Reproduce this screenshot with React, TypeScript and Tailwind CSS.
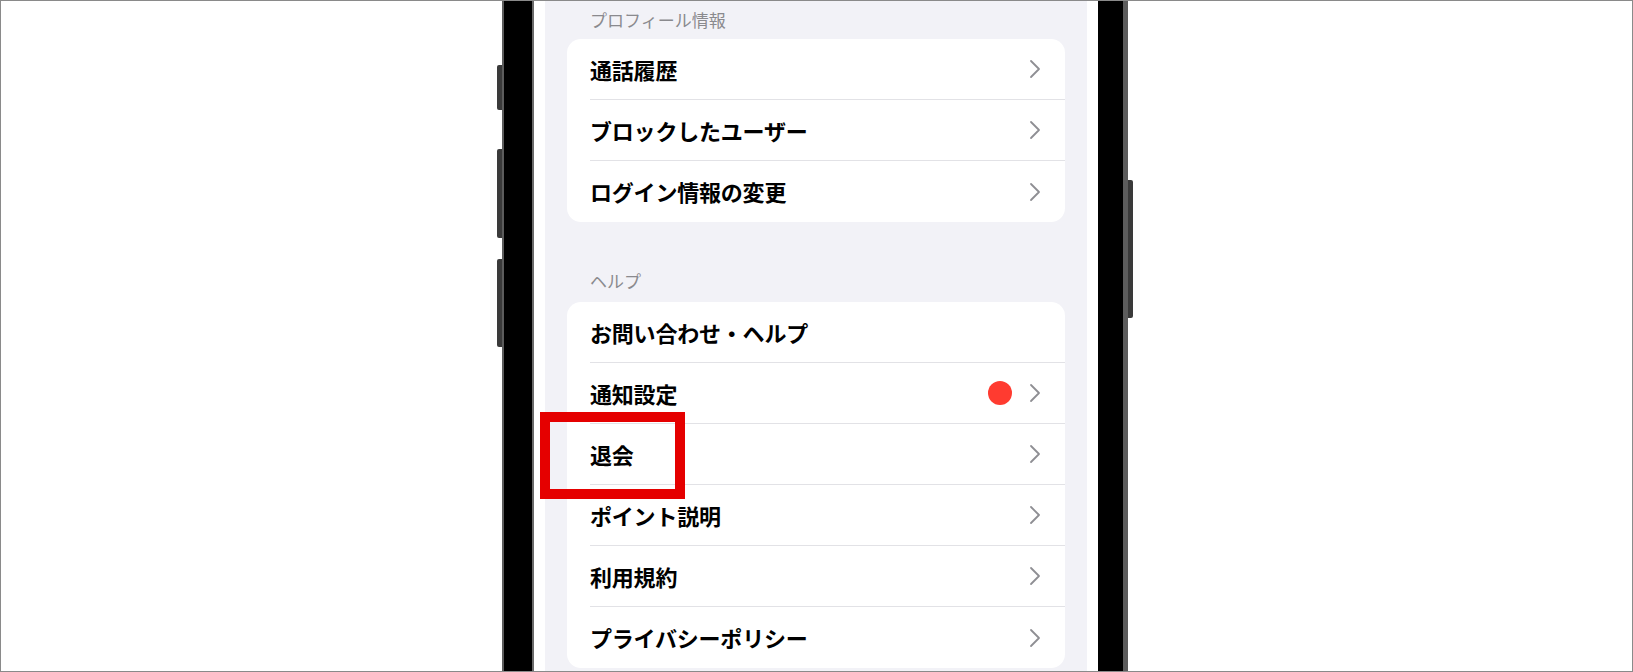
import React from 'react'

interface Row {
  label: string
  chevron?: boolean
  badge?: boolean
}

const profileRows: Row[] = [
  { label: '通話履歴', chevron: true },
  { label: 'ブロックしたユーザー', chevron: true },
  { label: 'ログイン情報の変更', chevron: true },
]

const helpRows: Row[] = [
  { label: 'お問い合わせ・ヘルプ' },
  { label: '通知設定', chevron: true, badge: true },
  { label: '退会', chevron: true },
  { label: 'ポイント説明', chevron: true },
  { label: '利用規約', chevron: true },
  { label: 'プライバシーポリシー', chevron: true },
]

function Chevron() {
  return (
    <svg width="12" height="20" viewBox="0 0 12 20" fill="none" className="shrink-0">
      <polyline points="2,2 10,10 2,18" stroke="#8e8e93" strokeWidth="1.8" strokeLinecap="round" strokeLinejoin="round" />
    </svg>
  )
}

function Card({ rows }: { rows: Row[] }) {
  return (
    <div className="bg-white rounded-[14px] overflow-hidden">
      {rows.map((row, i) => (
        <div key={row.label} className="h-[61px] pl-[23px]">
          <div
            className={`h-full flex items-center pr-[24px] ${i < rows.length - 1 ? 'border-b border-[#e2e2e6]' : ''}`}
          >
            <span className="flex-1 text-[22px] font-bold text-black tracking-[-0.2px]">{row.label}</span>
            {row.badge && <span className="w-[24px] h-[24px] rounded-full bg-[#ff3b30] mr-[17px]" />}
            {row.chevron && <Chevron />}
          </div>
        </div>
      ))}
    </div>
  )
}

function SectionHeader({ children }: { children: React.ReactNode }) {
  return <div className="h-[22px] leading-[22px] pl-[23px] text-[17px] text-[#8a8a8e]">{children}</div>
}

export default function App() {
  return (
    <div
      className="relative w-[1633px] h-[672px] border border-[#8a8a8a] bg-white flex overflow-hidden"
      style={{ fontFamily: '"Noto Sans CJK JP", "Noto Sans", sans-serif' }}
    >
      <div className="ml-[496px] flex h-full">
        {/* left side buttons */}
        <div className="w-[5px] flex flex-col">
          <div className="mt-[64px] h-[45px] bg-[#3a3a3a] rounded-l-[2px]" />
          <div className="mt-[39px] h-[89px] bg-[#3a3a3a] rounded-l-[2px]" />
          <div className="mt-[21px] h-[88px] bg-[#3a3a3a] rounded-l-[2px]" />
        </div>

        {/* phone body */}
        <div className="h-full flex bg-black border-l-2 border-r-[5px] border-[#5c5c5c] pl-[28px] pr-[25px]">
          <div className="h-full border-l-2 border-[#6a6a6a] bg-white px-[11px]">
            <div className="w-[542px] h-full bg-[#f2f2f7] px-[22px] pt-[8px] flex flex-col">
              <div className="mb-[8px]">
                <SectionHeader>プロフィール情報</SectionHeader>
              </div>
              <Card rows={profileRows} />
              <div className="mt-[48px] mb-[10px]">
                <SectionHeader>ヘルプ</SectionHeader>
              </div>
              <Card rows={helpRows} />
            </div>
          </div>
        </div>

        {/* right side button */}
        <div className="w-[5px] flex flex-col">
          <div className="mt-[179px] h-[138px] bg-[#3a3a3a] rounded-r-[2px]" />
        </div>
      </div>

      {/* highlight box */}
      <div className="absolute left-[539px] top-[411px] w-[145px] h-[87px] border-[10px] border-[#e50000]" />
    </div>
  )
}
